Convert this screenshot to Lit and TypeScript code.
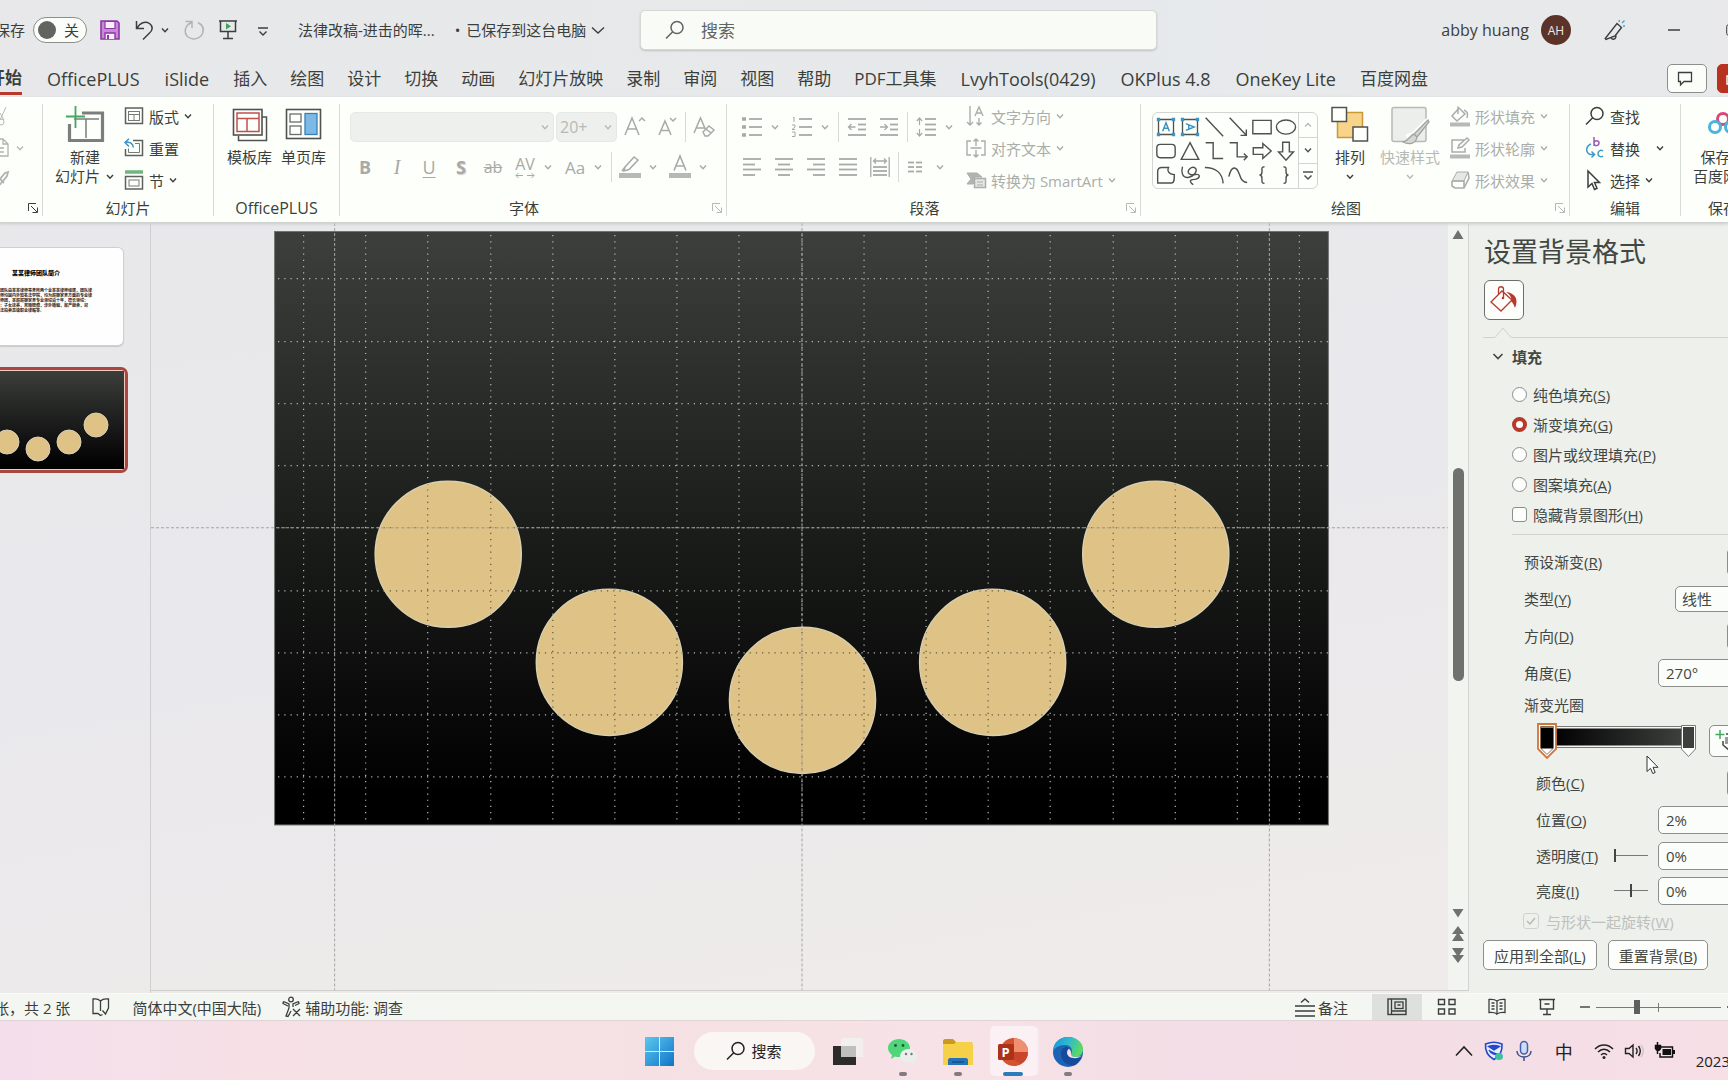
import { LitElement, html, css, svg } from "lit";
import { customElement, state } from "lit/decorators.js";

const icon = (w: number, h: number, body: unknown, cls = "ic") =>
  html`<svg class=${cls} width=${w} height=${h} viewBox="0 0 ${w} ${h}" aria-hidden="true">${body}</svg>`;

const chevron = (cls = "chev") =>
  html`<svg class=${cls} width="10" height="10" viewBox="0 0 10 10" aria-hidden="true"><path d="M2 3.5 5 6.8 8 3.5" /></svg>`;

const launcher = (dim = false) =>
  html`<button class="launch ${dim ? "dim" : ""}" aria-label="more">
    ${icon(12, 12, svg`<path d="M1.5 9V1.5H9M4 4l6 6M10.5 5.5v5h-5"/>`)}
  </button>`;

const lines = (ys: number[][]) => svg`${ys.map(([y, a, b]) => svg`<path d="M${a} ${y}H${b}"/>`)}`;

const I = {
  save: icon(20, 20, svg`<path d="M1 1h16l2 2v16H1z" fill="#c78bd6" stroke="#8f35a8" stroke-width="1.6"/><path d="M5 1.5h10v7H5z" fill="#f8effa" stroke="#8f35a8" stroke-width="1.2"/><path d="M5 19v-6h10v6" fill="#f8effa" stroke="#8f35a8" stroke-width="1.4"/><path d="M8 15v4" stroke="#8f35a8" stroke-width="2"/>`),
  undo: icon(20, 20, svg`<path d="M2.500 1v7.500h7.500M3 8C6 3 11 .5 15.500 3.500c4 3 3 7 0 9.500L9 19.500" stroke-width="1.5"/>`),
  redo: icon(20, 20, svg`<path d="M1.500 1.500h6.500v6.500M7.500 2.500C1 5.500-1 12.500 4 17c5 3.500 12 2 14.500-3.500 1.500-4 .5-8.500-4.500-11" stroke="#b2b3b4" stroke-width="1.5"/>`),
  show: icon(20, 20, svg`<path d="M1 1h18M2.500 1v10.500h15V1M10 11.500v7M5 18.500h10" stroke-width="1.5"/><path d="M8 3l5 3.200-5 3.200z" fill="#3fa35a" stroke="none"/>`),
  more: icon(20, 20, svg`<path d="M6 8h10M7.500 11.500 11 15l3.500-3.500" stroke-width="1.4"/>`),
  mag: icon(20, 20, svg`<circle cx="12" cy="7.500" r="6" stroke-width="1.5"/><path d="M7.700 11.800 1 18.500" stroke-width="1.5"/>`),
  horn: icon(22, 22, svg`<path d="M13 4.500l4.500 4-6.500 8.500L2 20.500l-.8-1zM7 18.500c1.500 3 5 2 5-2" stroke-width="1.4"/><path d="M15 3l.5-2M18 4l2.500-2.500M19 7h2" stroke="#49a5cf" stroke-width="1.4"/>`),
  bubble: icon(18, 18, svg`<path d="M2.500 2.500h13v9H8L4.500 15v-3.500h-2z" stroke-width="1.300"/>`),
  cut: icon(10, 24, svg`<path d="M0 16 6 3M0 9l4 7" stroke="#b5b8b4"/><circle cx="1" cy="18" r="3" stroke="#b5b8b4"/>`),
  copy: icon(10, 20, svg`<path d="M-8 1H3l5 5v12H-8M3 1v5h5M-4 10h8M-4 14h8" stroke="#b0b3af" stroke-width="1.300"/>`),
  brush: icon(10, 20, svg`<path d="M0 9 5 3l3-1-1 4-4 5M0 9l4 4M-3 18l5-6" stroke="#b0b3af" stroke-width="1.800"/>`),
  newSlide: icon(38, 36, svg`<path d="M16 7h20.500v27.500H3.500V18" stroke="#7b7e7b" stroke-width="3.200"/><path d="M8 13h25M20 13v19" stroke="#7b7e7b" stroke-width="1.500"/><path d="M9.500 0v22M0 10.500h19" stroke="#41a85f" stroke-width="1.800"/>`),
  layout: icon(20, 20, svg`<rect x="1.500" y="2" width="17" height="15.500" stroke="#5d605d" stroke-width="1.500"/><rect x="4.500" y="5.500" width="11" height="9" stroke="#777a77"/><path d="M4.500 8.500h11M10 8.500v6" stroke="#777a77"/>`),
  reset: icon(20, 20, svg`<path d="M9 2.500h9.500v15h-17V11" stroke="#5d605d" stroke-width="1.500"/><path d="M11 5.500h4.500v9h-11v-4" stroke="#777a77"/><path d="M5 .8 1 4.500l4 4M1.300 4.500c5-.8 7.700 1 8 5" stroke="#3b93c6" stroke-width="1.500"/>`),
  section: icon(20, 20, svg`<path d="M1 2h18" stroke="#6fb582" stroke-width="3.500"/><rect x="1.500" y="6.500" width="17" height="12.500" stroke="#5d605d" stroke-width="1.500"/><rect x="5" y="10" width="10" height="6" stroke="#777a77"/>`),
  tpl: icon(38, 36, svg`<path d="M31 11h4.500v23.500h-28V30" stroke="#4f524f" stroke-width="1.500"/><rect x="2.500" y="3.500" width="28.500" height="25.500" stroke="#4f524f" stroke-width="1.600"/><rect x="6" y="7" width="22" height="18.500" stroke="#c0504d" stroke-width="1.500"/><path d="M6 12.500h22M16 12.500v13" stroke="#c0504d" stroke-width="1.500"/>`),
  page: icon(38, 36, svg`<rect x="1.500" y="3.500" width="34" height="29" stroke="#4f524f" stroke-width="1.600"/><rect x="5" y="8" width="11" height="8" stroke="#6b6e6b" stroke-width="1.300"/><rect x="5" y="20" width="11" height="8.500" stroke="#6b6e6b" stroke-width="1.300"/><rect x="20" y="7.500" width="12" height="21" fill="#7db9e6" stroke="#3a7fb5" stroke-width="1.300"/>`),
  grow: icon(22, 24, svg`<path d="M1 20 8 3l7 17M3.500 14h9M15 6l3-3 3 3" stroke-width="1.500"/>`),
  shrink: icon(20, 24, svg`<path d="M2 20 8 6l6 14M4 15.500h8M13 3l3 3 3-3" stroke-width="1.500"/>`),
  clear: icon(22, 24, svg`<path d="M1 18 7.500 3l5 11.500M3.500 13h8" stroke-width="1.500"/><path d="M10 17l6-6 5 4-6 6h-3zM13 14l5 4" stroke-width="1.500"/>`),
  pen: icon(22, 24, svg`<path d="M6 12 15 2l4 3-9 9.500-5 1.500zM3 16l3-4" stroke-width="1.500"/><path d="M0 20.500h22" stroke-width="5" stroke="#b7b9b6"/>`),
  fontColor: icon(22, 24, svg`<path d="M5 15.500 11 1l6 14.500M7 11h8" stroke-width="1.600"/><path d="M0 20.500h22" stroke-width="5" stroke="#b7b9b6"/>`),
  bullets: icon(20, 20, svg`<path d="M0 2h4M0 10h4M0 18h4" stroke-width="3.500"/>${lines([[2, 7, 20], [10, 7, 20], [18, 7, 20]])}`),
  numbers: icon(20, 20, svg`<path d="M1 1l1-1v5M0 8h3v2L0 12.500h3M0 15h3v4.500H0" stroke-width="1"/>${lines([[2, 7, 20], [10, 7, 20], [18, 7, 20]])}`),
  outdent: icon(20, 20, svg`${lines([[2, 1, 19], [7.500, 11, 19], [12.500, 11, 19], [18, 1, 19]])}<path d="M8.500 10H2M4.500 7 1.500 10l3 3" stroke-width="1.300"/>`),
  indent: icon(20, 20, svg`${lines([[2, 1, 19], [7.500, 11, 19], [12.500, 11, 19], [18, 1, 19]])}<path d="M1 10h7M5.500 7 8.500 10l-3 3" stroke-width="1.300"/>`),
  spacing: icon(20, 20, svg`${lines([[2, 9, 20], [7.500, 9, 20], [12.500, 9, 20], [18, 9, 20]])}<path d="M3.500 1v7M3.500 12v7M.8 4 3.500 1l2.700 3M.8 16l2.700 3 2.700-3" stroke-width="1.200"/>`),
  left: icon(20, 20, lines([[2, 1, 19], [7.500, 1, 13], [12.500, 1, 19], [18, 1, 13]])),
  center: icon(20, 20, lines([[2, 1, 19], [7.500, 4, 16], [12.500, 1, 19], [18, 4, 16]])),
  right: icon(20, 20, lines([[2, 1, 19], [7.500, 7, 19], [12.500, 1, 19], [18, 7, 19]])),
  justify: icon(20, 20, lines([[2, 1, 19], [7.500, 1, 19], [12.500, 1, 19], [18, 1, 19]])),
  dist: icon(20, 20, svg`<path d="M.8 0v20M19.200 0v20M4 4h12M6 1.500 3.500 4 6 6.500M14 1.500 16.500 4 14 6.500" stroke-width="1.300"/>${lines([[10, 3, 17], [14, 3, 17], [18, 3, 17]])}`),
  cols: icon(20, 20, svg`${lines([[5.500, 1, 7], [10, 1, 7], [14.500, 1, 7], [5.500, 9, 15], [10, 9, 15], [14.500, 9, 15]])}`),
  textDir: icon(20, 20, svg`<path d="M4 0v19M1 16l3 3 3-3M9 10l4-9 4 9M10.500 7h5M13 12v7M10.500 16.500 13 19l2.500-2.500" stroke-width="1.400"/>`),
  alignText: icon(20, 20, svg`<path d="M5 3H1v14h4M15 3h4v14h-4M10 1v7M10 12v7M7.500 3.500 10 1l2.500 2.500M7.500 16.500 10 19l2.500-2.500M4.500 10h11" stroke-width="1.400"/>`),
  smart: icon(20, 20, svg`<path d="M1 3h10l5 4H8l3 3-4 4H1l4-5z" fill="#b2b4b1"/><rect x="8.500" y="8.500" width="11" height="9" fill="#e5e7e4" stroke-width="1.500"/><path d="M11 12h6M11 15h6" stroke-width="1.200"/>`),
  arrange: icon(38, 36, svg`<rect x="6.500" y="6.500" width="25" height="25" fill="#f7d488" stroke="#c9973c" stroke-width="1.500"/><rect x="1" y="1.500" width="14.500" height="14" fill="#fdfffb" stroke="#4f524f" stroke-width="1.500"/><rect x="22" y="21" width="14.500" height="14" fill="#fdfffb" stroke="#4f524f" stroke-width="1.500"/>`),
  quick: icon(40, 38, svg`<rect x="2" y="1.500" width="34" height="34" rx="2" fill="#eceeeb" stroke="#b7b9b6" stroke-width="1.500"/><path d="M38 14 23 29l-4 1 2 5" stroke="#fdfffb" stroke-width="5"/><path d="M38 14 24 28l3 3 12-15zM24 28c-4 1-4 6-11 8 6 3 13 2 14-5z" fill="#d4d6d3" stroke="#a0a29f" stroke-width="1.300"/>`),
  fillIc: icon(20, 22, svg`<path d="M2 11 9 3l6 6-8 7zM8 9V1.500M14 5c4 2 4 4 3 8" stroke-width="1.500"/><path d="M0 19.500h20" stroke="#b7b9b6" stroke-width="4"/>`),
  outline: icon(20, 22, svg`<path d="M15 3H2v12h13v-4M8 11l1-3 8-7 2 2-7 7z" stroke-width="1.500"/><path d="M0 19.500h20" stroke="#b7b9b6" stroke-width="4"/>`),
  effect: icon(20, 20, svg`<path d="M7 2h11l-4 9H2z" fill="#e5e7e4"/><path d="M2 11v5l3 2h9l5-10-1-6M14 11v7M2 11h12" stroke-width="1.600"/>`),
  replace: icon(20, 24, svg`<path d="M9 1v9M9 7c0-3 5-3 5 0s-5 4-5 0" stroke="#a35bb8" stroke-width="1.500"/><path d="M18 15c-2-1.500-5-.5-5 2.500s3 4 5 2.500M6 8c-5 2-6 8-1 10.500h4M6.500 15.500 9.500 18.500l-3 3" stroke="#3b9ac6" stroke-width="1.500"/>`),
  select: icon(20, 22, svg`<path d="M3 2v16l4-3.500 2.500 6 2.500-1.200-2.500-5.800h5z" stroke-width="1.500"/>`),
  pan: icon(36, 36, svg`<circle cx="18" cy="13" r="5.500" stroke="#d9487a" stroke-width="3"/><circle cx="10" cy="21" r="5.500" stroke="#49b4dd" stroke-width="3"/><circle cx="26" cy="21" r="5.500" stroke="#49b4dd" stroke-width="3"/>`),
  bucket: icon(30, 30, svg`<path d="M2 17 13 6l10 9-11 11z" stroke="#b8382c" stroke-width="1.300"/><path d="M9.500 9V4c0-3 5-3 5 0v8" stroke="#b8382c" stroke-width="1.300"/><circle cx="14" cy="13" r="1.300" fill="#b8382c" stroke="none"/><path d="M17 7c9 1 13 7 9 16-1-3-2-5-4-7 1-4-1-6-5-9z" fill="#b8382c" stroke="none"/>`),
  book: icon(20, 20, svg`<path d="M9.500 4C7 1.500 4.500 1.500 2 2v14.500h5l2.500 2 2-1M9.500 4c2.500-2.500 5-2.500 8-2V11l-3 6-3-3.500M9.500 4v10" stroke-width="1.300"/>`),
  access: icon(20, 22, svg`<circle cx="9" cy="3.500" r="2.300" stroke-width="1.300"/><path d="M1.500 5.500 7 8v4l-3 8 2 .5L9 15M16.500 5.500 11 8v3M1.500 5.500l-.5 2L6 10M16.500 5.500l.5 2-4 2M11 13l7 7M18 13l-7 7" stroke-width="1.300"/>`),
  notes: icon(20, 20, svg`<path d="M6 5.500 10 2l4 3.500M0 9h20M0 14h20M0 19h20" stroke-width="1.400"/>`),
  vNormal: icon(20, 18, svg`<rect x="1" y="1" width="18" height="15.500" stroke-width="1.400"/><rect x="8" y="4" width="8" height="6.500" stroke-width="1.300"/><path d="M4.500 1v15.500M4.500 13H19M10.500 7h3" stroke-width="1.300"/>`),
  vGrid: icon(20, 18, svg`<path d="M1.500 1.500h6v5h-6zM12 1.500h6v5h-6zM1.500 11h6v5h-6zM12 11h6v5h-6z" stroke-width="1.400"/>`),
  vRead: icon(20, 18, svg`<path d="M10 3C8 1.500 5 1.200 2 1.500v13c3-.3 6 0 8 1.500M10 3c2-1.500 5-1.800 8-1.500v13c-3-.3-6 0-8 1.500zM4.500 5h3M4.500 8h3M4.500 11h3M12.500 5h3M12.500 8h3M12.500 11h3" stroke-width="1.300"/>`),
  vShow: icon(20, 18, svg`<path d="M2 1.500h16M3.500 1.500v9.500h13V1.500M10 11v5.500M6 16.500h8M7.500 6h5" stroke-width="1.400"/>`),
  win: icon(30, 30, svg`<defs><linearGradient id="w" x1="0" y1="0" x2="1" y2="1"><stop offset="0" stop-color="#5cc8f0"/><stop offset="1" stop-color="#1173c7"/></linearGradient></defs><path d="M0 0h14v14H0zM15 0h14v14H15zM0 15h14v14H0zM15 15h14v14H15z" fill="url(#w)" stroke="none"/>`),
  task: icon(30, 30, svg`<path d="M0 9h23v19H0z" fill="#2c2c2b" stroke="none"/><path d="M8 1h22v19H8z" fill="#f1f2f0" opacity=".8" stroke="none"/><path d="M8 9h15v11H8z" fill="#bfc0be" stroke="none"/>`),
  wechat: icon(30, 30, svg`<path d="M11 2c6 0 11 4 11 9 0 6-5 9-11 9-1 0-3 0-4-.5L3 22l1-4C1 16 0 13 0 11c0-5 5-9 11-9z" fill="#4fd67a" stroke="none"/><ellipse cx="20.500" cy="19" rx="8.500" ry="7" fill="#eceeec" stroke="none"/><path d="m23 25 4 2-1-4" fill="#eceeec" stroke="none"/><circle cx="7.500" cy="8.500" r="1.400" fill="#1e5a35" stroke="none"/><circle cx="15" cy="8.500" r="1.400" fill="#1e5a35" stroke="none"/><circle cx="18" cy="17" r="1.200" fill="#777" stroke="none"/><circle cx="23.500" cy="17" r="1.200" fill="#777" stroke="none"/>`),
  folder: icon(30, 30, svg`<path d="M0 4c0-1 1-2 2-2h8l3 3h16v8H0z" fill="#c99a1f" stroke="none"/><path d="M0 7h11l2-2h15c1 0 2 1 2 2v21H0z" fill="#f5d048" stroke="none"/><path d="M5 28v-5c0-1 1-2 2-2h16c1 0 2 1 2 2v5z" fill="#2473b8" stroke="none"/><path d="M9 25h12" stroke="#164f86" stroke-width="1.500"/>`),
  ppt: icon(30, 30, svg`<circle cx="16" cy="15" r="14" fill="#d35230" stroke="none"/><path d="M16 1a14 14 0 0 1 14 14H16z" fill="#f08f6f" stroke="none"/><path d="M2 15h28a14 14 0 0 1-7 12z" fill="#c4422a" stroke="none" opacity=".7"/><rect x="0" y="7" width="16" height="16" rx="1.500" fill="#ac3218" stroke="none"/>`),
  edge: icon(30, 30, svg`<defs><linearGradient id="e" x1="0" y1="0" x2="1" y2=".3"><stop offset="0" stop-color="#1f8fd0"/><stop offset=".5" stop-color="#2bb8d5"/><stop offset="1" stop-color="#5bd866"/></linearGradient></defs><circle cx="15" cy="15" r="15" fill="#1a63b5" stroke="none"/><path d="M0 13C1 5 7 0 15 0c9 0 15 6 15 12 0 5-3 8-8 8-3 0-4-1-4-3 2-3 1-9-6-9C6 8 1 11 0 15z" fill="url(#e)" stroke="none"/><path d="M28 19c-4 3-13 3-14-4 0-2 1-3 2-4-2-2-8-1-8 6 0 8 8 13 14 11 3-2 6-6 6-9z" fill="#184a9c" stroke="none"/><path d="M29 18c-4 5-14 4-15-2 0-2 1-4 2-4 2 1 2 3 2 5s2 3 4 3c3 0 6-1 7-2z" fill="#f5e1e6" stroke="none"/>`),
  caret: icon(20, 20, svg`<path d="M2 14.500 10 6l8 8.500" stroke="#222" stroke-width="1.600"/>`),
  shield: icon(20, 20, svg`<path d="M10 1.200C7 1.200 4 2 1.500 3c-.5 7 2 12 8.500 15.500C16.500 15 18.500 10 18 3c-2.500-1-5-1.800-8-1.800z" fill="#e8eefc" stroke="#2547c9" stroke-width="1.600"/><path d="M4.500 5.500c4-1.500 7-1.500 11 0L10 9zM5 9c2 4 6 5 9 4" fill="#2547c9" stroke="#2547c9" stroke-width="1.400"/><ellipse cx="15" cy="15.500" rx="4" ry="3.500" fill="#3fc0a0" stroke="none"/>`),
  mic: icon(20, 22, svg`<rect x="6.500" y="1.500" width="7" height="12.500" rx="3.500" fill="#cfdcf5" stroke="#4460a8" stroke-width="1.500"/><path d="M3 11c0 8 14 8 14 0M10 17v4" stroke="#3c4f86" stroke-width="1.500"/>`),
  wifi: icon(20, 20, svg`<path d="M1 8c5-5.500 13-5.500 18 0M4 11c3.500-3.800 8.500-3.800 12 0M7 14c2-2 4-2 6 0" stroke="#222" stroke-width="1.500"/><circle cx="10" cy="16.500" r="1.500" fill="#222" stroke="none"/>`),
  vol: icon(20, 20, svg`<path d="M1.500 7.500v5H5l4 3.500V4L5 7.500zM12 7c1.500 2 1.500 4 0 6M14.500 5c2.500 3.500 2.500 6.500 0 10" stroke="#222" stroke-width="1.400"/><path d="M17 4c3 4 3 8 0 12" stroke="#cbbcc0" stroke-width="1.200"/>`),
  batt: icon(22, 20, svg`<path d="M6 6h12.500v10H6v-4M3.500 1v12M1.500 4.500h5v3c-1.500 2.500-3.500 2.500-5 0z" stroke="#111" stroke-width="1.500"/><path d="M8.500 8H17v6H8.500zM19 9h2v4h-2zM1.500 4.500h5v3c-1.500 2.500-3.500 2.500-5 0z" fill="#111" stroke="none"/>`),
};

const SHAPES = [
  svg`<path d="M3 3h18v18H3z" stroke-width="1.600"/><path d="M8 17 12 7l4 10M9.500 13.500h5" stroke="#3b93c6" stroke-width="1.800"/><path d="M1 1h4v4H1zM19 1h4v4h-4zM1 19h4v4H1zM19 19h4v4h-4z" fill="#3b93c6" stroke="none"/>`,
  svg`<path d="M3 3h18v18H3z" stroke-width="1.600"/><path d="M7 8l10 4-10 4M10.500 9.500v5" stroke="#3b93c6" stroke-width="1.800"/><path d="M1 1h4v4H1zM19 1h4v4h-4zM1 19h4v4H1zM19 19h4v4h-4z" fill="#3b93c6" stroke="none"/>`,
  svg`<path d="M2 1l21 22"/>`,
  svg`<path d="M2 1l20 21M22 15v7h-7"/>`,
  svg`<path d="M1 4h22v16H1z"/>`,
  svg`<ellipse cx="12" cy="12" rx="11.500" ry="8.500"/>`,
  svg`<rect x="1" y="4" width="22" height="16" rx="4"/>`,
  svg`<path d="M12 2 22.500 22h-21z"/>`,
  svg`<path d="M2 2h9v19h12"/>`,
  svg`<path d="M2 2h9v17h12M19 15l4 4-4 4"/>`,
  svg`<path d="M1.500 8H13V3l10 9-10 9v-5H1.500z"/>`,
  svg`<path d="M8 1.500h8V13h5l-9 10-9-10h5z"/>`,
  svg`<path d="M2 8c0-4 2-5 5-5h8c-2 4 0 8 7 8.500 0 6 0 10-3 10H2z"/>`,
  svg`<path d="M3 2c-2 7 0 14 7 13s12-9 8-11.500-11 3.500-7 7 11-1.500 12 2-4 5-8 5-3 4 1 6"/>`,
  svg`<path d="M1 3c12 0 21 6 22 19"/>`,
  svg`<path d="M1 14C4 1 10 0 14 12c2 7 5 9 9 9"/>`,
  svg`<path d="M15 2c-4 0-3 3-3 6 0 3-1 4-3 4 2 0 3 1 3 4 0 3-1 6 3 6"/>`,
  svg`<path d="M9 2c4 0 3 3 3 6 0 3 1 4 3 4-2 0-3 1-3 4 0 3 1 6-3 6"/>`,
];

const TABS = ["OfficePLUS", "iSlide", "插入", "绘图", "设计", "切换", "动画", "幻灯片放映", "录制", "审阅", "视图", "帮助", "PDF工具集", "LvyhTools(0429)", "OKPlus 4.8", "OneKey Lite", "百度网盘"];

const BALLS: [number, number][] = [[297, 331], [458, 439], [651, 477], [841, 439], [1004, 331]];

const base = css`
  :host, * { box-sizing: border-box; }
  button { font: inherit; color: inherit; background: none; border: 0; padding: 0; margin: 0; display: flex; align-items: center; white-space: nowrap; }
  input, select { font: inherit; color: inherit; margin: 0; }
  svg { display: block; flex: none; fill: none; stroke: currentColor; overflow: visible; }
  .chev { stroke-width: 1.4; }
`;

@customElement("ppt-titlebar")
export class PptTitlebar extends LitElement {
  static styles = [base, css`
    :host { display: grid; grid-template-columns: minmax(0, 640fr) minmax(0, 517fr) minmax(0, 571fr); align-items: center; height: 60px; font-size: 15px; }
    .left, .quick, .undo, .right { display: flex; align-items: center; white-space: nowrap; }
    .left { padding-bottom: 1px; }
    .auto { display: flex; align-items: center; gap: 8px; margin-left: -5px; }
    .toggle { width: 54px; height: 26px; border: 1px solid #8b8e8b; border-radius: 13px; background: #fbfdf9; padding: 0 7px 0 4px; justify-content: space-between; }
    .knob { width: 18px; height: 18px; border-radius: 50%; background: #616461; }
    .quick { gap: 14px; margin-left: 13px; }
    .undo { gap: 6px; }
    .name { margin-left: 26px; }
    .saved { gap: 6px; margin-left: 20px; }
    .search { display: flex; align-items: center; gap: 14px; height: 40px; padding: 0 24px; background: #f8fbf6; border: 1px solid #d6d8d6; border-radius: 5px; box-shadow: 0 1px 2px #bfc1c0; color: #616461; }
    .search input { flex: 1; min-width: 0; border: 0; background: none; outline: 0; font-size: 17px; }
    .search input::placeholder { color: #616461; opacity: 1; }
    .right { justify-content: flex-end; overflow: hidden; height: 60px; }
    .user { font-size: 16px; }
    .avatar { width: 30px; height: 30px; border-radius: 50%; background: #5b3328; color: #f1e8e5; font-size: 12px; justify-content: center; margin: 0 33px 0 12px; }
    .min { margin: 0 46px 0 42px; }
    .max { margin-right: -10px; }
  `];
  @state() private auto = false;
  render() {
    return html`
      <div class="left">
        <label class="auto">保存
          <button class="toggle" role="switch" aria-checked=${this.auto}><span class="knob"></span><span>关</span></button>
        </label>
        <div class="quick">
          <button aria-label="保存">${I.save}</button>
          <div class="undo"><button aria-label="撤消">${I.undo}</button><button aria-label="撤消选项">${chevron()}</button></div>
          <button aria-label="恢复">${I.redo}</button>
          <button aria-label="放映">${I.show}</button>
          <button aria-label="自定义">${I.more}</button>
        </div>
        <span class="name">法律改稿-进击的晖...</span>
        <button class="saved"><span>•</span>已保存到这台电脑${icon(12, 12, svg`<path d="M0 3.500 6 9l6-5.500" stroke-width="1.400"/>`)}</button>
      </div>
      <label class="search">${I.mag}<input type="search" placeholder="搜索" aria-label="搜索" /></label>
      <div class="right">
        <span class="user">abby huang</span>
        <button class="avatar">AH</button>
        <button aria-label="即将推出">${I.horn}</button>
        <button class="min" aria-label="最小化">${icon(12, 12, svg`<path d="M0 6h12" stroke-width="1.500"/>`)}</button>
        <button class="max" aria-label="最大化">${icon(12, 12, svg`<rect x=".7" y=".7" width="10.600" height="10.600" rx="2"/>`)}</button>
      </div>`;
  }
}

@customElement("ppt-tabs")
export class PptTabs extends LitElement {
  static styles = [base, css`
    :host { display: flex; align-items: stretch; height: 37px; font-size: 17px; overflow: hidden; }
    nav { display: flex; margin-left: -12px; gap: 23px; flex: 1; }
    a { color: inherit; text-decoration: none; white-space: nowrap; line-height: 38px; }
    .latin { font-size: 18px; padding: 0 1px; }
    .on { font-weight: 700; display: flex; flex-direction: column; line-height: 35px; padding-right: 1px; }
    .on::after { content: ""; height: 3px; margin-top: -3px; background: #b8382c; }
    .acts { display: flex; gap: 10px; padding-top: 4px; margin-right: -29px; }
    .acts button { width: 40px; height: 29px; border: 1px solid #8b8e8b; border-radius: 5px; background: #fbfdf9; justify-content: center; padding-right: 4px; }
    .acts .rec { background: #b7321f; border-color: #b7321f; color: #fff; justify-content: flex-start; padding-left: 8px; }
  `];
  render() {
    return html`
      <nav>
        <a class="on" href="#home">开始</a>
        ${TABS.map((t) => html`<a class=${/^[A-Za-z][\x20-\x7e]+$/.test(t) ? "latin" : ""} href="#tab">${t}</a>`)}
      </nav>
      <div class="acts">
        <button aria-label="批注">${I.bubble}</button>
        <button class="rec" aria-label="共享">${icon(12, 12, svg`<path d="M1 3v8h10V3z" stroke-width="1.400"/>`)}</button>
      </div>`;
  }
}

@customElement("ppt-ribbon")
export class PptRibbon extends LitElement {
  static styles = [base, css`
    :host { display: flex; flex: none; height: 126px; padding: 7px 0; background: #fdfffb; font-size: 15px; overflow: hidden; border-bottom: 1px solid #d0d2d0; box-shadow: 0 1px 3px #c9cacb; position: relative; }
    .grp { display: flex; flex-direction: column; flex: none; height: 112px; border-right: 1px solid #d8dad7; }
    .body { display: flex; height: 97px; align-items: flex-start; }
    .foot { display: flex; align-items: center; height: 16px; line-height: 16px; }
    .foot span { flex: 1; text-align: center; }
    .foot.lat { font-size: 16px; }
    .launch { width: 18px; justify-content: center; }
    .dim { color: #b7b9b6; }
    .clip { width: 43px; }
    .slides { width: 171px; }
    .slides .body { padding-left: 12px; gap: 9px; }
    .plus { width: 126px; }
    .plus .body { padding-left: 13px; gap: 9px; }
    .font { width: 387px; }
    .para { width: 414px; }
    .draw { width: 429px; }
    .draw .body { padding-left: 11px; }
    .edit { width: 111px; }
    .edit .body { padding-left: 15px; }
    .pan { width: 84px; border: 0; }
    .pan .body { justify-content: center; }
    .col { display: flex; flex-direction: column; margin-top: -4px; }
    .col > * { height: 32px; gap: 5px; }
    .col .n { margin-left: -1px; }
    .big { flex-direction: column; gap: 6px; padding-top: 2px; line-height: 19px; text-align: center; }
    .big span { display: flex; flex-direction: column; align-items: center; }
    .big .ln { flex-direction: row; gap: 5px; }
    .big .chev { height: 19px; }
    .tools { color: #a7aaa6; display: flex; flex-direction: column; gap: 10px; padding: 8px 0 0 10px; }
    .para .tools { padding: 8px 12px 0 15px; }
    .row { display: flex; align-items: center; gap: 8px; height: 30px; }
    .tool { width: 20px; height: 24px; justify-content: center; font-size: 18px; }
    .para .tool svg { stroke-width: 1.8; }
    .tool + .tool, .c + .tool { margin-left: 4px; }
    .c { width: 10px; }
    .sep { width: 1px; height: 30px; background: #d8dad7; }
    .style-row { padding-left: 5px; }
    .boxes { display: flex; gap: 2px; }
    .box { display: flex; align-items: center; justify-content: space-between; height: 30px; border: 1px solid #e6e8e5; border-radius: 5px; background: #eef0ed; padding: 0 3px; width: 204px; color: #b7b9b6; font-size: 16px; }
    .size { width: 61px; }
    .box select { appearance: none; border: 0; background: none; flex: 1; min-width: 0; padding: 0; opacity: 1; color: inherit; }
    .b { font-weight: 700; } .i { font-style: italic; font-family: "Liberation Serif", serif; font-size: 20px; } .u { text-decoration: underline; text-underline-offset: 3px; }
    .sh { font-weight: 700; text-shadow: 1px 1px 1px #ccc; }
    .st { text-decoration: line-through; font-size: 16px; }
    .av { flex-direction: column; font-size: 16px; line-height: 16px; }
    .aa { font-size: 17px; }
    .gallery { display: flex; height: 77px; width: 166px; margin: 8px 13px 0 0; border: 1px solid #d3d5d2; border-radius: 6px; overflow: hidden; color: #4f524f; }
    .shapes { display: grid; grid-template-columns: repeat(6, 24px); grid-template-rows: repeat(3, 24px); padding: 2px 0 0 1px; flex: 1; }
    .shapes button { justify-content: center; }
    .shapes svg { width: 20px; height: 20px; stroke-width: 1.7; }
    .scroll { display: flex; flex-direction: column; width: 19px; border-left: 1px solid #d3d5d2; }
    .scroll button { flex: 1; justify-content: center; }
    .scroll button + button { border-top: 1px solid #d3d5d2; }
    .arr { margin-right: 11px; }
    .qs { margin-right: 10px; gap: 4px; }
    .far { margin-left: 10px; }
    .dimcol { color: #abadaa; }
  `];
  private tool(label: string, body: unknown, cls = "") {
    return html`<button class="tool ${cls}" aria-label=${label}>${body}</button>`;
  }
  private c() {
    return html`<button class="c" aria-label="选项">${chevron()}</button>`;
  }
  render() {
    const sep = html`<i class="sep"></i>`;
    return html`
      <section class="grp clip">
        <div class="body"><div class="col dim">
          <button aria-label="剪切">${I.cut}</button>
          <button aria-label="复制">${I.copy}${chevron()}</button>
          <button aria-label="格式刷">${I.brush}</button>
        </div></div>
        <div class="foot"><span></span>${launcher()}</div>
      </section>
      <section class="grp slides">
        <div class="body">
          <button class="big">${I.newSlide}<span>新建<span class="ln">幻灯片${chevron()}</span></span></button>
          <div class="col">
            <button>${I.layout}版式${chevron("chev n")}</button>
            <button>${I.reset}重置</button>
            <button>${I.section}节${chevron("chev n")}</button>
          </div>
        </div>
        <div class="foot"><span>幻灯片</span></div>
      </section>
      <section class="grp plus">
        <div class="body">
          <button class="big">${I.tpl}<span>模板库</span></button>
          <button class="big">${I.page}<span>单页库</span></button>
        </div>
        <div class="foot lat"><span>OfficePLUS</span></div>
      </section>
      <section class="grp font">
        <div class="body"><div class="tools">
          <div class="row">
            <div class="boxes">
              <label class="box"><select disabled aria-label="字体"><option></option></select>${chevron()}</label>
              <label class="box size"><select disabled aria-label="字号"><option>20+</option></select>${chevron()}</label>
            </div>
            ${this.tool("增大字号", I.grow)}${this.tool("减小字号", I.shrink)}${sep}${this.tool("清除格式", I.clear)}
          </div>
          <div class="row style-row">
            ${this.tool("加粗", "B", "b")}${this.tool("倾斜", "I", "i")}${this.tool("下划线", "U", "u")}${this.tool("阴影", "S", "sh")}${this.tool("删除线", "ab", "st")}
            ${this.tool("字符间距", html`AV${icon(20, 7, svg`<path d="M1 3.500h7M12 3.500h7M3.500 1 1 3.500 3.500 6M16.500 1 19 3.500 16.500 6"/>`)}`, "av")}${this.c()}
            ${this.tool("更改大小写", "Aa", "aa")}${this.c()}${sep}${this.tool("突出显示", I.pen)}${this.c()}${this.tool("字体颜色", I.fontColor)}${this.c()}
          </div>
        </div></div>
        <div class="foot"><span>字体</span>${launcher(true)}</div>
      </section>
      <section class="grp para">
        <div class="body">
          <div class="tools">
            <div class="row">
              ${this.tool("项目符号", I.bullets)}${this.c()}${this.tool("编号", I.numbers)}${this.c()}${sep}
              ${this.tool("降低级别", I.outdent)}${this.tool("提高级别", I.indent)}${sep}${this.tool("行距", I.spacing)}${this.c()}
            </div>
            <div class="row">
              ${this.tool("左对齐", I.left)}${this.tool("居中", I.center)}${this.tool("右对齐", I.right)}${this.tool("两端对齐", I.justify)}${this.tool("分散对齐", I.dist)}${sep}${this.tool("分栏", I.cols)}${this.c()}
            </div>
          </div>
          <div class="col dimcol">
            <button>${I.textDir}文字方向${chevron("chev n")}</button>
            <button>${I.alignText}对齐文本${chevron("chev n")}</button>
            <button>${I.smart}转换为 SmartArt${chevron("chev n")}</button>
          </div>
        </div>
        <div class="foot"><span>段落</span>${launcher(true)}</div>
      </section>
      <section class="grp draw">
        <div class="body">
          <div class="gallery">
            <div class="shapes">${SHAPES.map((s) => html`<button aria-label="形状">${icon(24, 24, s)}</button>`)}</div>
            <div class="scroll">
              <button class="dim" aria-label="上">${icon(10, 10, svg`<path d="M2 6.500 5 3.500l3 3" stroke-width="1.300"/>`)}</button>
              <button aria-label="下">${chevron()}</button>
              <button aria-label="其他">${icon(10, 10, svg`<path d="M0 1h10M1.500 4.500 5 8l3.500-3.500" stroke-width="1.500"/>`)}</button>
            </div>
          </div>
          <button class="big arr">${I.arrange}<span>排列${chevron()}</span></button>
          <button class="big qs dim">${I.quick}<span>快速样式${chevron()}</span></button>
          <div class="col dimcol">
            <button>${I.fillIc}形状填充${chevron("chev n")}</button>
            <button>${I.outline}形状轮廓${chevron("chev n")}</button>
            <button>${I.effect}形状效果${chevron("chev n")}</button>
          </div>
        </div>
        <div class="foot"><span>绘图</span>${launcher(true)}</div>
      </section>
      <section class="grp edit">
        <div class="body"><div class="col">
          <button>${I.mag}查找</button>
          <button>${I.replace}替换<span class="far">${chevron()}</span></button>
          <button>${I.select}选择${chevron("chev n")}</button>
        </div></div>
        <div class="foot"><span>编辑</span></div>
      </section>
      <section class="grp pan">
        <div class="body"><button class="big">${I.pan}<span>保存到<span>百度网盘</span></span></button></div>
        <div class="foot"><span>保存</span></div>
      </section>`;
  }
}

@customElement("ppt-thumbs")
export class PptThumbs extends LitElement {
  static styles = [base, css`
    :host { display: flex; flex-direction: column; gap: 21px; padding-top: 24px; width: 151px; flex: none; border-right: 1px solid #cfcfd2; overflow: hidden; }
    .one { width: 124px; height: 99px; border: 1px solid #cfcfd1; border-left: 0; border-radius: 0 6px 6px 0; background: #fefefe; color: #222; padding-top: 21px; font-weight: 700; box-shadow: 0 1px 1px #c9c9cb; overflow: hidden; }
    h2 { margin: 0 0 11px 12px; font-size: 6px; line-height: 8px; font-weight: 900; color: #000; }
    p { margin: 0; width: 94px; font-size: 4px; line-height: 5px; white-space: nowrap; }
    .two { width: 128px; height: 106px; border: 3px solid #a8483f; border-left: 0; border-radius: 0 7px 7px 0; padding: 1px 1px 1px 0; background: #f0c9c2; }
    .two svg { border-radius: 0 4px 4px 0; }
  `];
  render() {
    const text = ["团队由某某律师事务所两个业某某律师组建，团队律", "师均国内外知名法学院，均为超额家务方面的专业律", "师团，某超超额家务专业领域逾十年，擅长领域：", "：子女抚养，离婚赔偿，涉外婚姻，房产继承，司", "法拍卖高级职业律服等。"];
    return html`
      <div class="one"><h2>某某律师团队简介</h2>${text.map((t) => html`<p>${t}</p>`)}</div>
      <div class="two">
        <svg width="124" height="98" viewBox="0 0 124 98" aria-hidden="true">
          <defs><linearGradient id="t" x1="0" y1="0" x2="0" y2="1"><stop offset="0" stop-color="#3b3e3b" /><stop offset=".98" stop-color="#000" /></linearGradient></defs>
          <rect width="124" height="98" fill="url(#t)" stroke="none" />
          ${[[7, 71], [38, 78], [69, 71], [96, 54]].map(([x, y]) => svg`<circle cx=${x} cy=${y} r="12" fill="#dfc285" stroke="#d8d0b8"/>`)}
        </svg>
      </div>`;
  }
}

@customElement("ppt-canvas")
export class PptCanvas extends LitElement {
  static styles = [base, css`
    :host { display: flex; flex: 1; min-width: 0; margin-bottom: 2px; border-bottom: 1px solid #cfcfcf; }
    .stage { flex: 1; min-width: 0; width: 0; height: 100%; overflow: hidden; }
    .bar { width: 21px; flex: none; display: flex; flex-direction: column; align-items: center; background: #f2f4f0; color: #6f716e; border-right: 1px solid #d3d4d2; padding: 1px 0 25px; }
    .track { flex: 1; width: 11px; display: flex; flex-direction: column; }
    .track::before { content: ""; flex: 223; }
    .thumb { flex: 214; border-radius: 6px; background: #6f716e; }
    .track::after { content: ""; flex: 221; }
    .bar button { height: 21px; }
    .bar svg { fill: currentColor; stroke: none; }
  `];
  render() {
    const vs = Array.from({ length: 17 }, (_, i) => 152.5 + i * 62.2);
    const hs = [55.5, 118.5, 180.5, 242.5, 304.5, 367.5, 429.5, 491.5, 553.5];
    const grid = vs.map((x) => `M${Math.round(x - 0.5) + 0.5} 12V600`).join("") + hs.map((y) => `M127 ${y}H1176`).join("");
    return html`
      <svg class="stage" viewBox="0 0 1296 767" preserveAspectRatio="xMidYMin slice" role="img" aria-label="幻灯片">
        <defs><linearGradient id="s" x1="0" y1="0" x2="0" y2="1"><stop offset="0" stop-color="#3c3f3c" /><stop offset=".5" stop-color="#1b1d1b" /><stop offset=".95" stop-color="#000" /></linearGradient></defs>
        <rect x="123.500" y="8.500" width="1053" height="593" fill="url(#s)" stroke="#6f736f" stroke-width="1" />
        <path d=${grid} stroke="#b9bcb8" stroke-width="1.2" stroke-dasharray="1.2 5" />
        ${BALLS.map(([x, y]) => svg`<circle cx=${x} cy=${y} r="73" fill="#dfc285" stroke="#d9cfae" stroke-width="1.500"/>`)}
        <clipPath id="balls">${BALLS.map(([x, y]) => svg`<circle cx=${x} cy=${y} r="73"/>`)}</clipPath>
        <path clip-path="url(#balls)" d=${grid} stroke="#5f563c" stroke-width="1.2" stroke-dasharray="1.2 5" />
        <path d="M183.500 0V767M650.500 0V767M1117.500 0V767M0 304.500H1296" stroke="#a3a4a3" stroke-dasharray="3 2" />
      </svg>
      <div class="bar">
        <button aria-label="向上">${icon(12, 10, svg`<path d="M6 0l5.500 9H.5z"/>`)}</button>
        <div class="track"><div class="thumb"></div></div>
        <button aria-label="向下">${icon(12, 10, svg`<path d="M6 9.500.500 1h11z"/>`)}</button>
        <button aria-label="上一张">${icon(12, 16, svg`<path d="M6 0l6 8H0zM6 6l6 9H0z"/>`)}</button>
        <button aria-label="下一张">${icon(12, 16, svg`<path d="M6 10 0 1h12zM6 16 0 8h12z"/>`)}</button>
      </div>`;
  }
}

@customElement("ppt-pane")
export class PptPane extends LitElement {
  static styles = [base, css`
    :host { display: block; width: 259px; flex: none; background: #edf0eb; padding: 14px 0 0 15px; font-size: 15px; overflow: hidden; color: #434743; }
    h1 { margin: 0; font-size: 27px; line-height: 30px; font-weight: 400; }
    .tile { width: 40px; height: 40px; margin-top: 13px; border: 1px solid #6b6e6b; border-radius: 6px; background: #fdfefc; justify-content: center; }
    .notch { margin-top: 7px; color: #cfd2ce; }
    .head { height: 30px; margin: 3px 0 8px 8px; gap: 8px; font-weight: 700; display: flex; align-items: center; }
    .opt { display: flex; align-items: center; height: 30px; margin-left: 28px; gap: 6px; white-space: nowrap; }
    .opt input { appearance: none; width: 15px; height: 15px; border: 1px solid #8b8e8b; border-radius: 50%; background: #fdfefc; }
    .opt input:checked { border: 4px solid #b8382c; }
    .opt input[type="checkbox"] { border: 1px solid #8b8e8b; border-radius: 3px; }
    hr { border: 0; border-top: 1px solid #cfd2ce; margin: 5px 0 8px 28px; }
    .row { display: flex; align-items: center; height: 37px; margin-left: 40px; white-space: nowrap; }
    .row > label { width: 134px; flex: none; }
    .sub { margin-left: 52px; }
    .row.sub > label { width: 122px; }
    .row.slim { height: 35px; }
    .row.wide > label { width: 151px; }
    .row.edge > label { width: 203px; }
    .row.sub.edge > label { width: 191px; }
    .row.cap { height: 27px; }
    .row.slim.sub > label { width: 78px; }
    .field { width: 100px; height: 28px; flex: none; border: 1px solid #8b8e8b; border-radius: 5px; background: #fbfdfa; padding: 0 7px; appearance: none; }
    .sel { height: 26px; padding: 0 6px; }
    input[type="range"] { appearance: none; width: 34px; height: 14px; margin-right: 10px; background: linear-gradient(#777a77, #777a77) center / 100% 1px no-repeat; flex: none; }
    input[type="range"]::-webkit-slider-thumb { appearance: none; width: 2px; height: 13px; background: #434743; }
    .stops { display: flex; align-items: center; height: 46px; margin-left: 53px; gap: 12px; position: relative; }
    .add { width: 40px; height: 32px; border: 1px solid #8b8e8b; border-radius: 5px; background: #fbfdfa; padding-left: 5px; flex: none; }
    .cursor { position: absolute; left: 109px; top: 37px; }
    .off { height: 26px; margin-left: 39px; color: #bdc0bc; display: flex; align-items: center; gap: 7px; white-space: nowrap; }
    .off input { appearance: none; width: 16px; height: 16px; border: 1px solid #cfd2ce; border-radius: 3px; background: url("data:image/svg+xml,%3Csvg xmlns='http://www.w3.org/2000/svg' viewBox='0 0 14 14'%3E%3Cpath d='M3 7l3 3 5-6' fill='none' stroke='%23b5b8b4' stroke-width='1.4'/%3E%3C/svg%3E") center no-repeat; }
    .btns { display: flex; gap: 11px; margin: 6px 0 0 -1px; }
    .btns button { height: 30px; border: 1px solid #8b8e8b; border-radius: 5px; background: #fdfefc; padding: 0 10px; }
  `];
  render() {
    const opts: [string, string][] = [["纯色填充", "S"], ["渐变填充", "G"], ["图片或纹理填充", "P"], ["图案填充", "A"]];
    return html`
      <h1>设置背景格式</h1>
      <button class="tile" aria-label="填充">${I.bucket}</button>
      ${icon(245, 11, svg`<path d="M-1 10.500H11L19 1l8 9.500H245"/>`, "notch")}
      <button class="head">${icon(12, 12, svg`<path d="M1.500 4 6 8.500 10.500 4" stroke-width="1.600"/>`)}填充</button>
      ${opts.map(([t, k]) => html`<label class="opt"><input type="radio" name="fill" ?checked=${k === "G"} /><span>${t}(<u>${k}</u>)</span></label>`)}
      <label class="opt"><input type="checkbox" /><span>隐藏背景图形(<u>H</u>)</span></label>
      <hr />
      <div class="row edge"><label for="preset">预设渐变(<u>R</u>)</label><button id="preset" class="field"></button></div>
      <div class="row wide"><label for="type">类型(<u>Y</u>)</label><select id="type" class="field sel"><option>线性</option></select></div>
      <div class="row edge"><label for="dir">方向(<u>D</u>)</label><button id="dir" class="field"></button></div>
      <div class="row"><label for="angle">角度(<u>E</u>)</label><input id="angle" class="field" value="270°" /></div>
      <div class="row cap">渐变光圈</div>
      <div class="stops">
        <svg width="160" height="36" viewBox="0 0 160 36" role="img" aria-label="渐变光圈">
          <defs><linearGradient id="g"><stop offset="0" stop-color="#000" /><stop offset="1" stop-color="#3c3f3c" /></linearGradient></defs>
          <rect x="12" y="3.500" width="134" height="21" fill="#f5f6f4" stroke="#777a77" />
          <rect x="14" y="5.500" width="130" height="17" fill="url(#g)" stroke="none" />
          <path d="M1 1h18v25L10 35 1 26z" fill="#fff" stroke="#d0743c" stroke-width="1.800" />
          <path d="M3.500 3.500h13V25L10 31.500 3.500 25z" fill="#fff" stroke="#8a6a50" /><rect x="4" y="4.500" width="12" height="21" fill="#000" stroke="none" />
          <path d="M144.500 2.500h14V26l-7 7.500-7-7.500z" fill="#fff" stroke="#777a77" /><rect x="146" y="4" width="11" height="21" fill="#3c3f3c" stroke="none" />
        </svg>
        <button class="add" aria-label="添加渐变光圈">${icon(24, 24, svg`<path d="M5 1v9M.5 5.500h9" stroke="#41a85f" stroke-width="1.500"/><path d="M11 5h9v11l-6 5-6-5v-4" stroke-width="1.500"/><path d="M10 8h8v7h-8z" fill="#9a9d9a" stroke="none"/>`)}</button>
        <svg class="cursor" width="14" height="20" viewBox="0 0 14 20" aria-hidden="true"><path d="M1 1v15.500l3.500-3.200 2.300 5.200 2.400-1-2.200-5.200H12z" fill="#fff" stroke="#333" /></svg>
      </div>
      <div class="row sub edge"><label for="color">颜色(<u>C</u>)</label><button id="color" class="field"></button></div>
      <div class="row sub"><label for="pos">位置(<u>O</u>)</label><input id="pos" class="field" value="2%" /></div>
      <div class="row sub slim"><label for="alpha">透明度(<u>T</u>)</label><input type="range" value="0" aria-label="透明度" /><input id="alpha" class="field" value="0%" /></div>
      <div class="row sub slim"><label for="light">亮度(<u>I</u>)</label><input type="range" value="50" aria-label="亮度" /><input id="light" class="field" value="0%" /></div>
      <label class="off"><input type="checkbox" checked disabled /><span>与形状一起旋转(<u>W</u>)</span></label>
      <div class="btns"><button><span>应用到全部(<u>L</u>)</span></button><button><span>重置背景(<u>B</u>)</span></button></div>`;
  }
}

@customElement("ppt-status")
export class PptStatus extends LitElement {
  static styles = [base, css`
    :host { display: flex; align-items: center; justify-content: space-between; flex: none; height: 27px; background: #f3f6f1; font-size: 15px; overflow: hidden; border-top: 1px solid #fafbf9; }
    .l, .r, .zoom { display: flex; align-items: center; white-space: nowrap; }
    .l { margin-left: -6px; gap: 21px; }
    .l button, .note { gap: 3px; }
    .note { margin-right: 24px; }
    .view { width: 50px; height: 26px; justify-content: center; }
    .on { background: #dde0dc; }
    .zoom { gap: 6px; margin: 0 -9px 0 8px; }
    input { appearance: none; width: 125px; height: 15px; background: linear-gradient(#777a77, #777a77) 50% 50% / 1px 9px no-repeat, linear-gradient(#777a77, #777a77) center / 100% 1px no-repeat; }
    input::-webkit-slider-thumb { appearance: none; width: 6px; height: 14px; background: #5d605d; }
  `];
  render() {
    return html`
      <div class="l"><span>张，共 2 张</span><button aria-label="拼写检查">${I.book}</button><button>简体中文(中国大陆)</button><button>${I.access}辅助功能: 调查</button></div>
      <div class="r">
        <button class="note">${I.notes}备注</button>
        <button class="view on" aria-label="普通">${I.vNormal}</button><button class="view" aria-label="浏览">${I.vGrid}</button><button class="view" aria-label="阅读">${I.vRead}</button><button class="view" aria-label="放映">${I.vShow}</button>
        <div class="zoom">
          <button aria-label="缩小">${icon(10, 10, svg`<path d="M0 5h10" stroke-width="1.400"/>`)}</button>
          <input type="range" value="32" aria-label="缩放" />
          <button aria-label="放大">${icon(10, 10, svg`<path d="M0 5h10M5 0v10" stroke-width="1.400"/>`)}</button>
        </div>
      </div>`;
  }
}

@customElement("win-taskbar")
export class WinTaskbar extends LitElement {
  static styles = [base, css`
    :host { display: grid; flex: none; grid-template-columns: 1fr auto 1fr; height: 60px; align-items: center; background: linear-gradient(90deg, #f4deec 0, #f6e0e7 12%, #f5e1e3 38%, #f7e2e7 56%, #f3dde6 70%, #f6dfe5 100%); border-top: 1px solid #dfd3d6; color: #222; font-size: 15px; overflow: hidden; }
    .mid { grid-column: 2; display: flex; align-items: center; gap: 6px; }
    .apps { display: flex; }
    .app { width: 55px; height: 50px; flex-direction: column; justify-content: flex-start; padding-top: 11px; gap: 5px; position: relative; }
    .app::after { content: ""; width: 8px; height: 4px; border-radius: 2px; }
    .run::after { background: #857a80; }
    .act { width: 47px; margin: 0 4px; background: #fbf1f4; border-radius: 5px; box-shadow: 3px 0 0 -1px #f8eaef; }
    .act::after { width: 20px; background: #2b7cb8; }
    .letter { position: absolute; left: 12px; top: 18px; font-size: 13px; font-weight: 700; line-height: 16px; color: #fff; }
    .search { width: 121px; height: 38px; border-radius: 19px; background: #faf6f4; justify-content: center; gap: 5px; }
    .search svg { stroke-width: 2; }
    .tray { display: flex; justify-content: flex-end; align-items: center; gap: 20px; }
    .set { display: flex; gap: 10px; }
    .ime { font-size: 18px; width: 20px; justify-content: center; }
    .date { padding-top: 20px; margin-right: -2px; }
  `];
  render() {
    return html`
      <div class="mid">
        <button class="app" aria-label="开始">${I.win}</button>
        <button class="search">${I.mag}搜索</button>
        <div class="apps">
          <button class="app" aria-label="任务视图">${I.task}</button>
          <button class="app run" aria-label="微信">${I.wechat}</button>
          <button class="app run" aria-label="文件">${I.folder}</button>
          <button class="app run act" aria-label="PowerPoint">${I.ppt}<span class="letter">P</span></button>
          <button class="app run" aria-label="Edge">${I.edge}</button>
        </div>
      </div>
      <div class="tray">
        <div class="set"><button aria-label="更多">${I.caret}</button><button aria-label="安全">${I.shield}</button><button aria-label="麦克风">${I.mic}</button></div>
        <button class="ime">中</button>
        <div class="set"><button aria-label="网络">${I.wifi}</button><button aria-label="音量">${I.vol}</button><button aria-label="电池">${I.batt}</button></div>
        <span class="date">2023</span>
      </div>`;
  }
}

@customElement("app-root")
export class AppRoot extends LitElement {
  static styles = css`
    :host { display: flex; flex-direction: column; height: 100vh; min-height: 1080px; overflow: hidden; font-family: "Open Sans", "Noto Sans CJK SC", sans-serif; color: #3b3f3b; background: linear-gradient(170deg, #e8e8eb 0, #e9e8ec 50%, #efebea 85%); }
    .top { background: linear-gradient(90deg, #e8e8ea, #e6e9eb 60%, #e9e9eb); }
    .work { display: flex; flex: 1; min-height: 0; }
  `;
  render() {
    return html`
      <div class="top"><ppt-titlebar></ppt-titlebar><ppt-tabs></ppt-tabs></div>
      <ppt-ribbon></ppt-ribbon>
      <div class="work"><ppt-thumbs></ppt-thumbs><ppt-canvas></ppt-canvas><ppt-pane></ppt-pane></div>
      <ppt-status></ppt-status>
      <win-taskbar></win-taskbar>`;
  }
}
